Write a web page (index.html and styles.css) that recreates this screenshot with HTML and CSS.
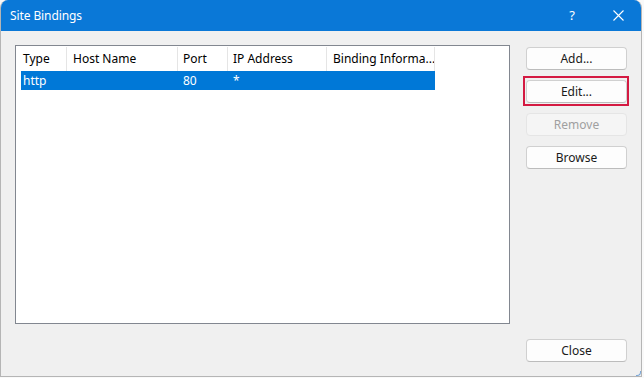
FILE: index.html
```html
<!DOCTYPE html>
<html>
<head>
<meta charset="utf-8">
<link rel="stylesheet" href="styles.css">
</head>
<body>
<div class="window">
  <div class="titlebar">
    <span class="title">Site Bindings</span>
    <div class="caption-buttons">
      <span class="cap help">?</span>
      <span class="cap close">
        <svg width="11" height="11" viewBox="0 0 11 11"><path d="M0.5 0.5 L10.5 10.5 M10.5 0.5 L0.5 10.5" stroke="#fff" stroke-width="1.1" fill="none"/></svg>
      </span>
    </div>
  </div>
  <div class="client">
    <div class="listview">
      <div class="row header">
        <div class="cell c1">Type</div>
        <div class="cell c2">Host Name</div>
        <div class="cell c3">Port</div>
        <div class="cell c4">IP Address</div>
        <div class="cell c5">Binding Informa...</div>
      </div>
      <div class="row item selected">
        <div class="cell c1">http</div>
        <div class="cell c2"></div>
        <div class="cell c3">80</div>
        <div class="cell c4">*</div>
        <div class="cell c5"></div>
      </div>
    </div>
    <div class="buttons">
      <button class="btn">Add...</button>
      <button class="btn focused">Edit...</button>
      <button class="btn disabled">Remove</button>
      <button class="btn">Browse</button>
      <div class="spacer"></div>
      <button class="btn">Close</button>
    </div>
  </div>
  <div class="grip"></div>
</div>
</body>
</html>
```
FILE: styles.css
```css
html, body {
  margin: 0;
  padding: 0;
  background: #f9f9f9;
  width: 644px;
  height: 378px;
  overflow: hidden;
}
body {
  font-family: "Segoe UI", "Noto Sans", sans-serif;
  font-size: 12px;
  color: #000;
}
.window {
  position: relative;
  width: 640px;
  height: 376px;
  border: 1px solid #b5b5b5;
  border-top: none;
  border-radius: 8px 8px 0 0;
  background: #f0f0f0;
  display: flex;
  flex-direction: column;
  overflow: hidden;
}
.titlebar {
  height: 31px;
  background: #0a78d7;
  color: #fff;
  display: flex;
  align-items: center;
  justify-content: space-between;
  padding-left: 9px;
  flex: none;
}
.title {
  font-size: 12px;
  letter-spacing: -0.1px;
}
.caption-buttons {
  display: flex;
  align-items: center;
  height: 100%;
}
.cap {
  display: flex;
  align-items: center;
  justify-content: center;
  height: 100%;
}
.help {
  width: 46px;
  font-size: 13px;
  padding-bottom: 1px;
}
.close {
  width: 46px;
}
.client {
  flex: 1;
  display: flex;
  gap: 16px;
  padding: 14px 14px 14px 14px;
}
.listview {
  width: 488px;
  height: 276px;
  border: 1px solid #828790;
  background: #fff;
  padding: 1px 0 0 5px;
  box-sizing: content-box;
  flex: none;
}
.row {
  display: flex;
  width: 414px;
}
.header {
  height: 24px;
}
.header .cell {
  border-right: 1px solid #e5e5e5;
  line-height: 24px;
}
.item {
  height: 19px;
}
.item .cell {
  line-height: 19px;
  border-right: 1px solid transparent;
}
.selected {
  background: #0078d7;
  color: #fff;
}
.cell {
  padding-left: 2px;
  box-sizing: border-box;
  white-space: nowrap;
  overflow: hidden;
}
.c1 { width: 46px; }
.c2 { width: 111px; padding-left: 6px; }
.c3 { width: 50px; padding-left: 5px; }
.c4 { width: 99px; padding-left: 5px; }
.c5 { width: 108px; padding-left: 6px; }
.buttons {
  display: flex;
  flex-direction: column;
  gap: 10px;
  padding-top: 2px;
  width: 101px;
}
.spacer {
  flex: 1;
}
.btn {
  position: relative;
  height: 23px;
  width: 101px;
  border: 1px solid #d0d0d0;
  border-bottom-color: #bcbcbc;
  border-radius: 4px;
  background: #fdfdfd;
  font-family: "Segoe UI", "Noto Sans", sans-serif;
  font-size: 12px;
  color: #1a1a1a;
  padding: 0;
  flex: none;
}
.btn.focused::after {
  content: "";
  position: absolute;
  left: -4px;
  right: -3px;
  top: -5px;
  bottom: -4px;
  border: 2px solid #d41a42;
}
.btn.disabled {
  background: #f5f5f5;
  border-color: #e5e5e5;
  color: #a0a0a0;
}
.buttons .btn:last-child {
  margin-bottom: 0;
}
.grip {
  position: absolute;
  right: 0;
  bottom: 0;
  width: 4px;
  height: 4px;
  border-right: 1px solid #7aa7d8;
  border-bottom: 1px solid #7aa7d8;
  border-bottom-right-radius: 4px;
}
```
